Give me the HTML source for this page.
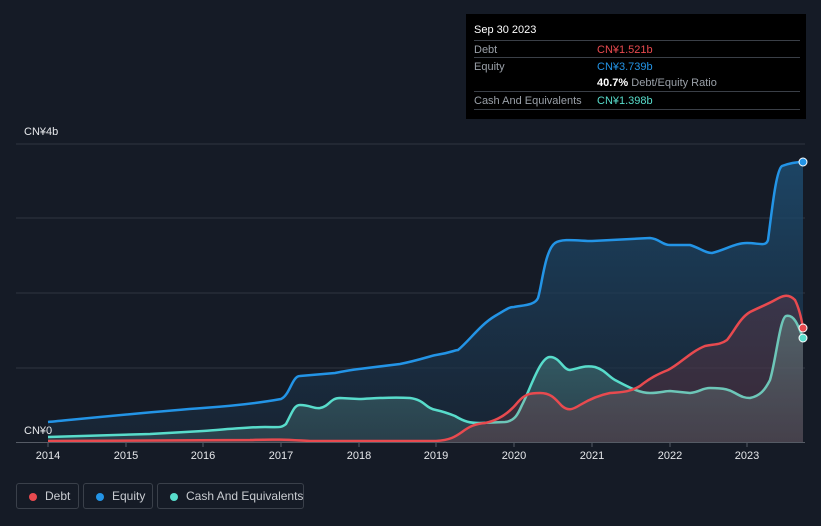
<!DOCTYPE html>
<html><head><meta charset="utf-8"><style>
body{margin:0;width:821px;height:526px;background:#151b26;font-family:"Liberation Sans",sans-serif;overflow:hidden;position:relative}
.tt{position:absolute;left:466px;top:14px;width:340px;height:105px;background:#000;font-size:11px}
.tt .r{position:absolute;left:8px;right:6px;border-top:1px solid #3a3f47;height:17px}
.tt span{position:absolute;top:3px}
.lg{position:absolute;top:483px;height:26px;border:1px solid #3a404a;border-radius:3px;color:#c9ccd1;font-size:12px;line-height:26px;box-sizing:border-box;white-space:nowrap}
.lg i{position:absolute;left:12px;top:9px;width:8px;height:8px;border-radius:50%}
.lg b{font-weight:normal;position:absolute;left:28px;top:-1px}
.ax{position:absolute;top:450px;color:#e6e8eb;font-size:11px;width:40px;text-align:center}
.lb{position:absolute;color:#e6e8eb;font-size:11px;z-index:2}
</style></head><body>
<div class="tt">
<div style="position:absolute;left:8px;top:10px;color:#fff;font-size:11px">Sep 30 2023</div>
<div class="r" style="top:26px"><span style="color:#9aa0a8;left:0">Debt</span><span style="color:#e84a4f;left:123px">CN¥1.521b</span></div>
<div class="r" style="top:43px"><span style="color:#9aa0a8;left:0">Equity</span><span style="color:#2394e6;left:123px">CN¥3.739b</span></div>
<div style="position:absolute;left:131px;top:63px;color:#9aa0a8"><b style="color:#fff">40.7%</b> Debt/Equity Ratio</div>
<div class="r" style="top:77px"><span style="color:#9aa0a8;left:0">Cash And Equivalents</span><span style="color:#58dccb;left:123px">CN¥1.398b</span></div>
<div class="r" style="top:95px;height:0"></div>
</div>
<svg width="821" height="526" style="position:absolute;left:0;top:0">
<defs>
<linearGradient id="ge" x1="0" y1="0" x2="0" y2="1"><stop offset="0" stop-color="#1e4f74" stop-opacity=".8"/><stop offset="1" stop-color="#1a2a3c" stop-opacity=".6"/></linearGradient>
<linearGradient id="gc" x1="0" y1="0" x2="0" y2="1"><stop offset="0" stop-color="#4a8a88" stop-opacity=".6"/><stop offset="1" stop-color="#3a5a62" stop-opacity=".5"/></linearGradient>
</defs>
<g stroke="#2e3440" stroke-width="1">
<line x1="16" y1="144" x2="805" y2="144"/><line x1="16" y1="218" x2="805" y2="218"/><line x1="16" y1="293" x2="805" y2="293"/><line x1="16" y1="368" x2="805" y2="368"/>
</g>
<path d="M48,422 C90,418 160,411 203,408 S270,401 281,399 C290,395 292,376 300,376 L335,373 C345,371 350,370 359,369 L400,364 C420,360 430,356 436,355 C450,353 455,350 458,350 C470,340 480,325 495,316 S510,307 514,307 C525,305 535,305 538,298 C542,285 545,250 555,243 C562,238 580,241 592,241 L650,238 C660,239 662,245 670,245 L690,245 C700,248 705,253 712,253 C725,250 735,243 747,243 S766,247 768,240 C772,210 776,170 782,166 C790,163 798,162 803,162 L803,442 L48,442 Z" fill="url(#ge)"/>
<path d="M48,437 L150,434 L203,431 C230,429 250,427 265,427 S281,428 286,424 C292,413 294,405 300,405 C310,405 314,409 320,408 C330,406 330,398 340,398 L359,399 C380,398 390,397 410,398 C425,400 425,408 436,410 C445,412 450,414 455,416 C465,422 470,423 480,423 L505,422 C515,421 518,414 522,405 C530,390 540,357 550,357 C560,357 563,370 570,370 C580,368 585,365 595,367 C605,370 608,376 615,380 C630,388 640,393 650,393 C660,393 665,391 670,391 L690,393 C700,392 702,388 710,388 C725,388 730,390 735,393 C742,397 745,398 750,398 C760,396 765,390 770,380 C776,360 780,318 786,316 C794,314 798,325 803,338 L803,442 L48,442 Z" fill="url(#gc)"/>
<path d="M48,422 C90,418 160,411 203,408 S270,401 281,399 C290,395 292,376 300,376 L335,373 C345,371 350,370 359,369 L400,364 C420,360 430,356 436,355 C450,353 455,350 458,350 C470,340 480,325 495,316 S510,307 514,307 C525,305 535,305 538,298 C542,285 545,250 555,243 C562,238 580,241 592,241 L650,238 C660,239 662,245 670,245 L690,245 C700,248 705,253 712,253 C725,250 735,243 747,243 S766,247 768,240 C772,210 776,170 782,166 C790,163 798,162 803,162" fill="none" stroke="#2394e6" stroke-width="2.5"/>
<path d="M48,437 L150,434 L203,431 C230,429 250,427 265,427 S281,428 286,424 C292,413 294,405 300,405 C310,405 314,409 320,408 C330,406 330,398 340,398 L359,399 C380,398 390,397 410,398 C425,400 425,408 436,410 C445,412 450,414 455,416 C465,422 470,423 480,423 L505,422 C515,421 518,414 522,405 C530,390 540,357 550,357 C560,357 563,370 570,370 C580,368 585,365 595,367 C605,370 608,376 615,380 C630,388 640,393 650,393 C660,393 665,391 670,391 L690,393 C700,392 702,388 710,388 C725,388 730,390 735,393 C742,397 745,398 750,398 C760,396 765,390 770,380 C776,360 780,318 786,316 C794,314 798,325 803,338" fill="none" stroke="#58dccb" stroke-width="2.5"/>
<path d="M48,441 L250,440 C280,439 290,440 310,441 L436,441 C450,440 455,437 462,432 C470,426 475,424 485,423 C500,420 510,412 518,402 C525,394 530,393 540,393 C552,393 556,400 562,406 C568,411 572,410 580,405 C590,399 600,395 610,393 C620,392 628,393 640,386 C650,378 658,374 668,370 C680,364 690,352 705,346 C715,344 720,345 727,340 C735,330 740,318 750,312 C760,307 768,304 775,300 C782,296 788,293 795,300 C800,310 802,322 803,328 L803,442 L48,442 Z" fill="#e84a4f" fill-opacity=".15"/>
<path d="M48,441 L250,440 C280,439 290,440 310,441 L436,441 C450,440 455,437 462,432 C470,426 475,424 485,423 C500,420 510,412 518,402 C525,394 530,393 540,393 C552,393 556,400 562,406 C568,411 572,410 580,405 C590,399 600,395 610,393 C620,392 628,393 640,386 C650,378 658,374 668,370 C680,364 690,352 705,346 C715,344 720,345 727,340 C735,330 740,318 750,312 C760,307 768,304 775,300 C782,296 788,293 795,300 C800,310 802,322 803,328" fill="none" stroke="#e84a4f" stroke-width="2.5"/>
<line x1="16" y1="442.5" x2="805" y2="442.5" stroke="#555b65"/>
<g stroke="#555b65"><line x1="48" y1="442" x2="48" y2="447"/><line x1="126" y1="442" x2="126" y2="447"/><line x1="203" y1="442" x2="203" y2="447"/><line x1="281" y1="442" x2="281" y2="447"/><line x1="359" y1="442" x2="359" y2="447"/><line x1="436" y1="442" x2="436" y2="447"/><line x1="514" y1="442" x2="514" y2="447"/><line x1="592" y1="442" x2="592" y2="447"/><line x1="670" y1="442" x2="670" y2="447"/><line x1="747" y1="442" x2="747" y2="447"/></g>
<circle cx="803" cy="162" r="4" fill="#2394e6" stroke="#fff" stroke-width="1"/>
<circle cx="803" cy="328" r="4" fill="#e84a4f" stroke="#fff" stroke-width="1"/>
<circle cx="803" cy="338" r="4" fill="#58dccb" stroke="#fff" stroke-width="1"/>
</svg>
<div class="lb" style="left:24px;top:126px">CN¥4b</div>
<div class="lb" style="left:24px;top:425px">CN¥0</div>
<div class="ax" style="left:28px">2014</div><div class="ax" style="left:106px">2015</div><div class="ax" style="left:183px">2016</div><div class="ax" style="left:261px">2017</div><div class="ax" style="left:339px">2018</div><div class="ax" style="left:416px">2019</div><div class="ax" style="left:494px">2020</div><div class="ax" style="left:572px">2021</div><div class="ax" style="left:650px">2022</div><div class="ax" style="left:727px">2023</div>
<div class="lg" style="left:16px;width:63px"><i style="background:#e84a4f"></i><b>Debt</b></div>
<div class="lg" style="left:83px;width:70px"><i style="background:#2394e6"></i><b>Equity</b></div>
<div class="lg" style="left:157px;width:147px"><i style="background:#58dccb"></i><b>Cash And Equivalents</b></div>
</body></html>
